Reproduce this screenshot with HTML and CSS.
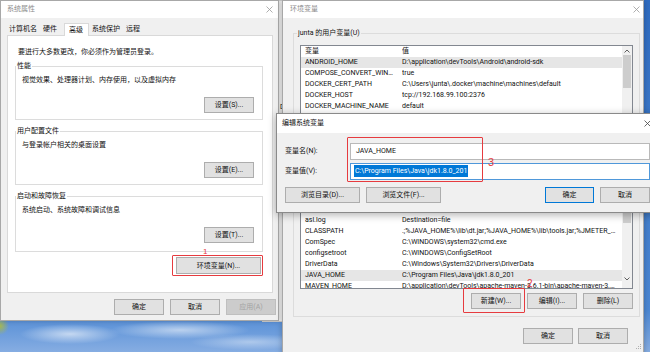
FILE: index.html
```html
<!DOCTYPE html>
<html lang="zh-CN">
<head>
  <meta charset="UTF-8">
  <meta name="viewport" content="width=device-width, initial-scale=1.0">
  <title>环境变量</title>
  <link rel="stylesheet" href="styles.css">
</head>
<body>
  <!-- Window behind the two dialogs -->
  <div class="win win-back"><span class="back-text">DOCKER_HOST</span></div>

  <!-- 系统属性 -->
  <div class="win win-sys">
    <div class="titlebar">
      <span class="title">系统属性</span>
      <svg class="close" width="7" height="7" viewBox="0 0 7 7"><path d="M0.5 0.5l6 6M6.5 0.5l-6 6" stroke="#9a9a9a" stroke-width="0.8"/></svg>
    </div>
    <div class="tabs">
      <span class="tab">计算机名</span>
      <span class="tab">硬件</span>
      <span class="tab active">高级</span>
      <span class="tab">系统保护</span>
      <span class="tab">远程</span>
    </div>
    <div class="tab-panel">
      <p class="notice">要进行大多数更改，你必须作为管理员登录。</p>

      <div class="group">
        <span class="group-label">性能</span>
        <p class="group-text">视觉效果、处理器计划、内存使用，以及虚拟内存</p>
        <div class="group-actions"><button class="btn">设置(S)...</button></div>
      </div>

      <div class="group">
        <span class="group-label">用户配置文件</span>
        <p class="group-text">与登录帐户相关的桌面设置</p>
        <div class="group-actions"><button class="btn">设置(E)...</button></div>
      </div>

      <div class="group group-last">
        <span class="group-label">启动和故障恢复</span>
        <p class="group-text">系统启动、系统故障和调试信息</p>
        <div class="group-actions"><button class="btn">设置(T)...</button></div>
      </div>

      <div class="env-row"><button class="btn btn-env">环境变量(N)...</button></div>
    </div>
    <div class="footer">
      <button class="btn">确定</button>
      <button class="btn">取消</button>
      <button class="btn" disabled>应用(A)</button>
    </div>
  </div>

  <!-- 环境变量 -->
  <div class="win win-env">
    <div class="titlebar">
      <span class="title">环境变量</span>
      <svg class="close" width="7" height="7" viewBox="0 0 7 7"><path d="M0.5 0.5l6 6M6.5 0.5l-6 6" stroke="#9a9a9a" stroke-width="0.8"/></svg>
    </div>
    <div class="env-body">
      <div class="group group-env">
        <span class="group-label">junta 的用户变量(U)</span>
        <div class="listview lv-user">
          <div class="lv-rows">
            <div class="lv-row lv-head"><span class="lv-name">变量</span><span class="lv-value">值</span></div>
            <div class="lv-row sel"><span class="lv-name">ANDROID_HOME</span><span class="lv-value">D:\application\devTools\Android\android-sdk</span></div>
            <div class="lv-row"><span class="lv-name">COMPOSE_CONVERT_WINDOWS_PATHS</span><span class="lv-value">true</span></div>
            <div class="lv-row"><span class="lv-name">DOCKER_CERT_PATH</span><span class="lv-value">C:\Users\junta\.docker\machine\machines\default</span></div>
            <div class="lv-row"><span class="lv-name">DOCKER_HOST</span><span class="lv-value">tcp://192.168.99.100:2376</span></div>
            <div class="lv-row"><span class="lv-name">DOCKER_MACHINE_NAME</span><span class="lv-value">default</span></div>
            <div class="lv-row"><span class="lv-name">DOCKER_TLS_VERIFY</span><span class="lv-value">1</span></div>
            <div class="lv-row"><span class="lv-name">OneDrive</span><span class="lv-value">C:\Users\junta\OneDrive</span></div>
          </div>
          <div class="lv-scroll">
            <span class="sb-arrow"><svg width="6" height="4" viewBox="0 0 6 4"><path d="M0.5 3.5L3 1l2.5 2.5" fill="none" stroke="#606060"/></svg></span>
            <span class="sb-thumb thumb-user"></span>
          </div>
        </div>
        <div class="group-buttons">
          <button class="btn">新建(N)...</button>
          <button class="btn">编辑(E)...</button>
          <button class="btn">删除(D)</button>
        </div>
      </div>

      <div class="group group-env group-sysvars">
        <span class="group-label">系统变量(S)</span>
        <div class="listview lv-sys">
          <div class="lv-rows">
            <div class="lv-row lv-head"><span class="lv-name">变量</span><span class="lv-value">值</span></div>
            <div class="lv-row"><span class="lv-name">ACSvcPort</span><span class="lv-value">17532</span></div>
            <div class="lv-row"><span class="lv-name">asl.log</span><span class="lv-value">Destination=file</span></div>
            <div class="lv-row"><span class="lv-name">CLASSPATH</span><span class="lv-value">.;%JAVA_HOME%\lib\dt.jar;%JAVA_HOME%\lib\tools.jar;%JMETER_HOME%\lib\ext\ApacheJMeter_core.jar</span></div>
            <div class="lv-row"><span class="lv-name">ComSpec</span><span class="lv-value">C:\WINDOWS\system32\cmd.exe</span></div>
            <div class="lv-row"><span class="lv-name">configsetroot</span><span class="lv-value">C:\WINDOWS\ConfigSetRoot</span></div>
            <div class="lv-row"><span class="lv-name">DriverData</span><span class="lv-value">C:\Windows\System32\Drivers\DriverData</span></div>
            <div class="lv-row sel"><span class="lv-name">JAVA_HOME</span><span class="lv-value">C:\Program Files\Java\jdk1.8.0_201</span></div>
            <div class="lv-row"><span class="lv-name">MAVEN_HOME</span><span class="lv-value">D:\application\devTools\apache-maven-3.6.1-bin\apache-maven-3.6.1</span></div>
          </div>
          <div class="lv-scroll">
            <span class="sb-arrow"><svg width="6" height="4" viewBox="0 0 6 4"><path d="M0.5 3.5L3 1l2.5 2.5" fill="none" stroke="#606060"/></svg></span>
            <span class="sb-thumb thumb-sys"></span>
            <span class="sb-arrow sb-down"><svg width="6" height="4" viewBox="0 0 6 4"><path d="M0.5 0.5L3 3l2.5-2.5" fill="none" stroke="#606060"/></svg></span>
          </div>
        </div>
        <div class="group-buttons">
          <button class="btn">新建(W)...</button>
          <button class="btn">编辑(I)...</button>
          <button class="btn">删除(L)</button>
        </div>
      </div>

      <div class="footer footer-env">
        <button class="btn">确定</button>
        <button class="btn">取消</button>
      </div>
    </div>
    <svg class="grip" width="7" height="7" viewBox="0 0 7 7"><path d="M6 1h1v1H6zM4 3h1v1H4zM6 3h1v1H6zM2 5h1v1H2zM4 5h1v1H4zM6 5h1v1H6z" fill="#b0b0b0"/></svg>
  </div>

  <!-- 编辑系统变量 -->
  <div class="win win-edit">
    <div class="titlebar">
      <span class="title">编辑系统变量</span>
      <svg class="close" width="7" height="7" viewBox="0 0 7 7"><path d="M0.5 0.5l6 6M6.5 0.5l-6 6" stroke="#444" stroke-width="0.8"/></svg>
    </div>
    <div class="edit-body">
      <div class="field-row">
        <span class="field-label">变量名(N):</span>
        <span class="field-input">JAVA_HOME</span>
      </div>
      <div class="field-row">
        <span class="field-label">变量值(V):</span>
        <span class="field-input focused"><span class="selected-text">C:\Program Files\Java\jdk1.8.0_201</span></span>
      </div>
      <div class="edit-buttons">
        <button class="btn btn-browse">浏览目录(D)...</button>
        <button class="btn btn-browse">浏览文件(F)...</button>
        <button class="btn btn-default">确定</button>
        <button class="btn">取消</button>
      </div>
    </div>
  </div>

  <!-- Red annotations -->
  <div class="mark mark-1"></div>
  <span class="mark-num num-1">1</span>
  <div class="mark mark-2"></div>
  <span class="mark-num num-2">2</span>
  <div class="mark mark-3"></div>
  <span class="mark-num num-3">3</span>
</body>
</html>
```

FILE: styles.css
```css
/* General */
* {
  box-sizing: border-box;
}

html {
  background: #4a86d2;
}

body {
  margin: 0;
  width: 650px;
  height: 352px;
  overflow: hidden;
  position: relative;
  font-family: Roboto, "Noto Sans CJK SC", sans-serif;
  font-size: 7px;
  line-height: 9px;
  color: #111;
  background-color: #4a86d2;
  background-image:
    radial-gradient(circle at 0 326px, #a6b850 0, rgba(166, 184, 80, 0) 9px),
    radial-gradient(50px 10px at 70px 334px, rgba(255, 255, 255, 0.6), rgba(255, 255, 255, 0)),
    radial-gradient(70px 9px at 180px 330px, rgba(255, 255, 255, 0.55), rgba(255, 255, 255, 0)),
    radial-gradient(60px 8px at 250px 342px, rgba(255, 255, 255, 0.4), rgba(255, 255, 255, 0)),
    linear-gradient(180deg, #2f6cc2 0%, #4c88d4 88%, #86ade2 100%);
}

p {
  margin: 0;
}

/* Windows */
.win {
  position: absolute;
  background: #f0f0f0;
  border: 1px solid #a8a8a8;
  display: flex;
  flex-direction: column;
}

.titlebar {
  flex: none;
  height: 17px;
  background: #fff;
  display: flex;
  align-items: center;
  justify-content: space-between;
  padding: 0 5px 0 6px;
}

.title {
  color: #8c8c8c;
}

.close {
  display: block;
}

.win-back {
  left: 262px;
  top: 0;
  width: 40px;
  height: 322px;
  background: #f4f4f4;
  border-color: #d0d0d0;
}

.back-text {
  display: block;
  margin: 102px 0 0 17px;
  white-space: nowrap;
}

/* 系统属性 */
.win-sys {
  left: 0;
  top: 0;
  width: 279px;
  height: 321px;
  box-shadow: 0 0 5px rgba(0, 0, 0, 0.2);
}

.tabs {
  flex: none;
  height: 17px;
  display: flex;
  align-items: flex-end;
  padding-left: 5px;
}

.tab {
  height: 11px;
  line-height: 11px;
  padding: 0 3px;
}

.tab.active {
  height: 13px;
  line-height: 13px;
  margin: 0 0 -1px 4px;
  padding: 0 5px 0 4px;
  background: #fff;
  border: 1px solid #d9d9d9;
  border-bottom: none;
  position: relative;
}

.tab-panel {
  flex: none;
  height: 258px;
  margin: 0 5px 0 6px;
  padding: 12px 9px 0 7px;
  background: #fff;
  border: 1px solid #d9d9d9;
}

.notice {
  margin: 0 0 9px 3px;
}

.group {
  border: 1px solid #dcdcdc;
  padding: 0 8px 6px 6px;
  margin-bottom: 11px;
  background: #fff;
}

.group-last {
  margin-bottom: 5px;
  padding-bottom: 8px;
}

.group-label {
  display: table;
  margin: -5px 0 0 -6px;
  padding: 0 1px;
  background: inherit;
}

.group-text {
  margin-top: 5px;
}

.group-actions {
  display: flex;
  justify-content: flex-end;
  margin-top: 12px;
}

.env-row {
  display: flex;
  justify-content: flex-end;
  padding-right: 2px;
}

.footer {
  flex: none;
  display: flex;
  justify-content: flex-end;
  gap: 6px;
  padding: 6px 2px 0 0;
}

/* Buttons */
.btn {
  width: 50px;
  height: 16px;
  padding: 0;
  border: 1px solid #adadad;
  background: #e1e1e1;
  font: inherit;
  color: inherit;
  line-height: 14px;
  white-space: nowrap;
}

.btn:disabled {
  color: #a3a3a3;
  background: #cccccc;
  border-color: #bfbfbf;
}

.btn-env {
  width: 85px;
  height: 17px;
}

.btn-default {
  border-color: #0078d7;
  margin-left: auto;
  width: 49px;
}

.btn-browse {
  width: 75px;
}

/* 环境变量 */
.win-env {
  left: 282px;
  top: 0;
  width: 362px;
  height: 358px;
  box-shadow: 0 0 6px rgba(0, 0, 0, 0.25);
}

.win-env .titlebar {
  padding: 0 3px 0 7px;
}

.env-body {
  padding: 15px 3px 0 10px;
}

.group-env {
  background: #f0f0f0;
  padding: 0 6px 7px 6px;
  margin-bottom: 0;
}

.group-env .group-label {
  margin-left: -3px;
}

.group-sysvars {
  margin-top: 18px;
}

.listview {
  display: flex;
  background: #fff;
  border: 1px solid #828790;
  overflow: hidden;
}

.group-env .listview {
  margin-top: 7px;
}

.group-sysvars .listview {
  margin-top: 6px;
}

.lv-user {
  height: 90px;
}

.lv-sys {
  height: 97px;
}

.lv-rows {
  flex: 1;
  min-width: 0;
  overflow: hidden;
}

.lv-row {
  display: flex;
  height: 11px;
  line-height: 11px;
  padding-left: 4px;
  white-space: nowrap;
}

.lv-row.sel {
  background: #e6e6e6;
}

.lv-name {
  flex: none;
  width: 97px;
  padding-right: 6px;
  overflow: hidden;
  text-overflow: ellipsis;
}

.lv-value {
  flex: 1;
  min-width: 0;
  padding-right: 4px;
  overflow: hidden;
  text-overflow: ellipsis;
}

.lv-scroll {
  flex: none;
  width: 10px;
  background: #f0f0f0;
  display: flex;
  flex-direction: column;
}

.sb-arrow {
  flex: none;
  height: 9px;
  display: flex;
  align-items: center;
  justify-content: center;
}

.sb-down {
  height: 14px;
  margin-top: auto;
  padding-bottom: 4px;
}

.sb-thumb {
  flex: none;
  margin: 0 1px;
  background: #cdcdcd;
}

.thumb-user {
  height: 33px;
}

.thumb-sys {
  margin-top: 3px;
  height: 18px;
}

.group-buttons {
  display: flex;
  justify-content: flex-end;
  gap: 6px;
  margin-top: 4px;
}

.footer-env {
  gap: 5px;
  padding: 11px 12px 0 0;
}

.grip {
  position: absolute;
  right: 2px;
  bottom: 7px;
}

/* 编辑系统变量 */
.win-edit {
  left: 276px;
  top: 113px;
  width: 384px;
  height: 100px;
  border-color: #8a8a8a;
  box-shadow: 0 2px 8px rgba(0, 0, 0, 0.3);
}

.win-edit .titlebar {
  height: 19px;
  padding: 0 8px 0 5px;
}

.win-edit .title {
  color: #111;
}

.edit-body {
  padding: 10px 9px 0 8px;
}

.field-row {
  display: flex;
  align-items: center;
  height: 17px;
  margin-bottom: 3px;
}

.field-label {
  flex: none;
  width: 65px;
}

.field-input {
  flex: 1;
  height: 17px;
  line-height: 15px;
  padding-left: 5px;
  background: #fff;
  border: 1px solid #b9b9b9;
  white-space: nowrap;
}

.field-input.focused {
  border-color: #4f98da;
  padding-left: 3px;
}

.selected-text {
  background: #0078d7;
  color: #fff;
  padding: 2px 1px;
}

.edit-buttons {
  display: flex;
  gap: 6px;
  margin-top: 7px;
}

/* Red annotations */
.mark {
  position: absolute;
  border: 1.5px solid #e63b3f;
  border-radius: 1px;
}

.mark-1 {
  left: 172px;
  top: 255px;
  width: 91px;
  height: 21px;
}

.mark-2 {
  left: 463px;
  top: 288px;
  width: 62px;
  height: 25px;
}

.mark-3 {
  left: 347px;
  top: 137px;
  width: 136px;
  height: 45px;
}

.mark-num {
  position: absolute;
  color: #e63b3f;
  font-family: "Liberation Sans", sans-serif;
}

.num-1 {
  left: 203px;
  top: 247px;
  font-size: 8px;
}

.num-2 {
  left: 527px;
  top: 279px;
  font-size: 10px;
}

.num-3 {
  left: 488px;
  top: 158px;
  font-size: 11px;
}
```
